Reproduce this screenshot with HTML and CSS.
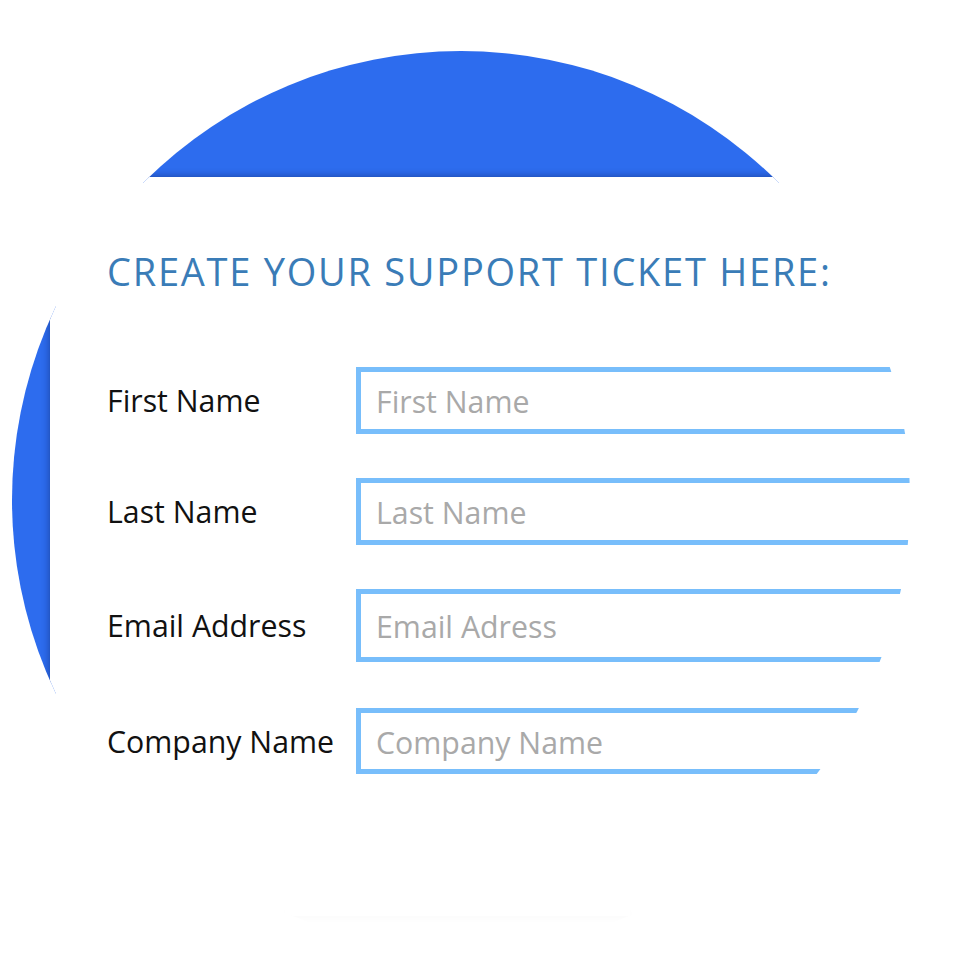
FILE: index.html
```html
<!DOCTYPE html>
<html lang="en">
<head>
<meta charset="utf-8">
<title>Support Ticket</title>
<link rel="stylesheet" href="styles.css">
</head>
<body>
<div class="stage">
  <div class="lens">
    <div class="card">
      <h1 class="title">CREATE YOUR SUPPORT TICKET HERE:</h1>
      <form class="form">
        <div class="field">
          <label class="label" for="fn">First Name</label>
          <input class="input" id="fn" type="text" placeholder="First Name">
        </div>
        <div class="field">
          <label class="label" for="ln">Last Name</label>
          <input class="input" id="ln" type="text" placeholder="Last Name">
        </div>
        <div class="field field--tall">
          <label class="label" for="em">Email Address</label>
          <input class="input" id="em" type="text" placeholder="Email Adress">
        </div>
        <div class="field field--short">
          <label class="label" for="cn">Company Name</label>
          <input class="input" id="cn" type="text" placeholder="Company Name">
        </div>
        <div class="ghost-button"></div>
      </form>
    </div>
  </div>
</div>
</body>
</html>
```

FILE: styles.css
```css
* { box-sizing: border-box; }

html, body {
  margin: 0;
  padding: 0;
  background: #ffffff;
}

body {
  font-family: "Open Sans", "Noto Sans", sans-serif;
}

.stage {
  width: 960px;
  height: 960px;
  padding-top: 51px;
  padding-left: 12px;
  overflow: hidden;
}

.lens {
  width: 898px;
  height: 898px;
  border-radius: 50%;
  overflow: hidden;
  background:
    linear-gradient(#2d6cee, #2d6cee) left top / 100% 132px no-repeat,
    linear-gradient(#2d6cee, #2d6cee) left top / 44px 100% no-repeat,
    #ffffff;
  padding-top: 126px;
  padding-left: 38px;
}

.card {
  width: 1000px;
  height: 900px;
  background: #ffffff;
  box-shadow: 0 0 7px 1px rgba(10, 30, 90, 0.45);
  padding-top: 76px;
  padding-left: 57px;
}

.title {
  margin: 0;
  font-weight: 400;
  font-size: 38px;
  line-height: 36px;
  color: #3a7cb7;
  letter-spacing: 1.75px;
  white-space: nowrap;
}

.form {
  margin: 78px 0 0 0;
  display: flex;
  flex-direction: column;
  gap: 44px;
}

.field {
  display: flex;
  align-items: center;
  height: 67px;
}

.field--tall { height: 73px; }
.field--short { height: 66px; margin-top: 2px; }

.label {
  width: 249px;
  flex: none;
  font-size: 30.3px;
  line-height: 1;
  padding-top: 2px;
  color: #111111;
  white-space: nowrap;
}

.input {
  width: 640px;
  height: 100%;
  flex: none;
  margin: 0;
  border: 5px solid #78befb;
  border-radius: 0;
  padding: 2px 0 0 15px;
  font-family: "Open Sans", "Noto Sans", sans-serif;
  font-size: 30.3px;
  color: #333333;
  background: #ffffff;
  outline: none;
}

.input::placeholder {
  color: #a9a9a9;
  opacity: 1;
}

.ghost-button {
  margin: 88px 0 0 178px;
  width: 345px;
  height: 10px;
  background: #ffffff;
  box-shadow: 0 4px 6px rgba(0, 0, 0, 0.015);
}
```
